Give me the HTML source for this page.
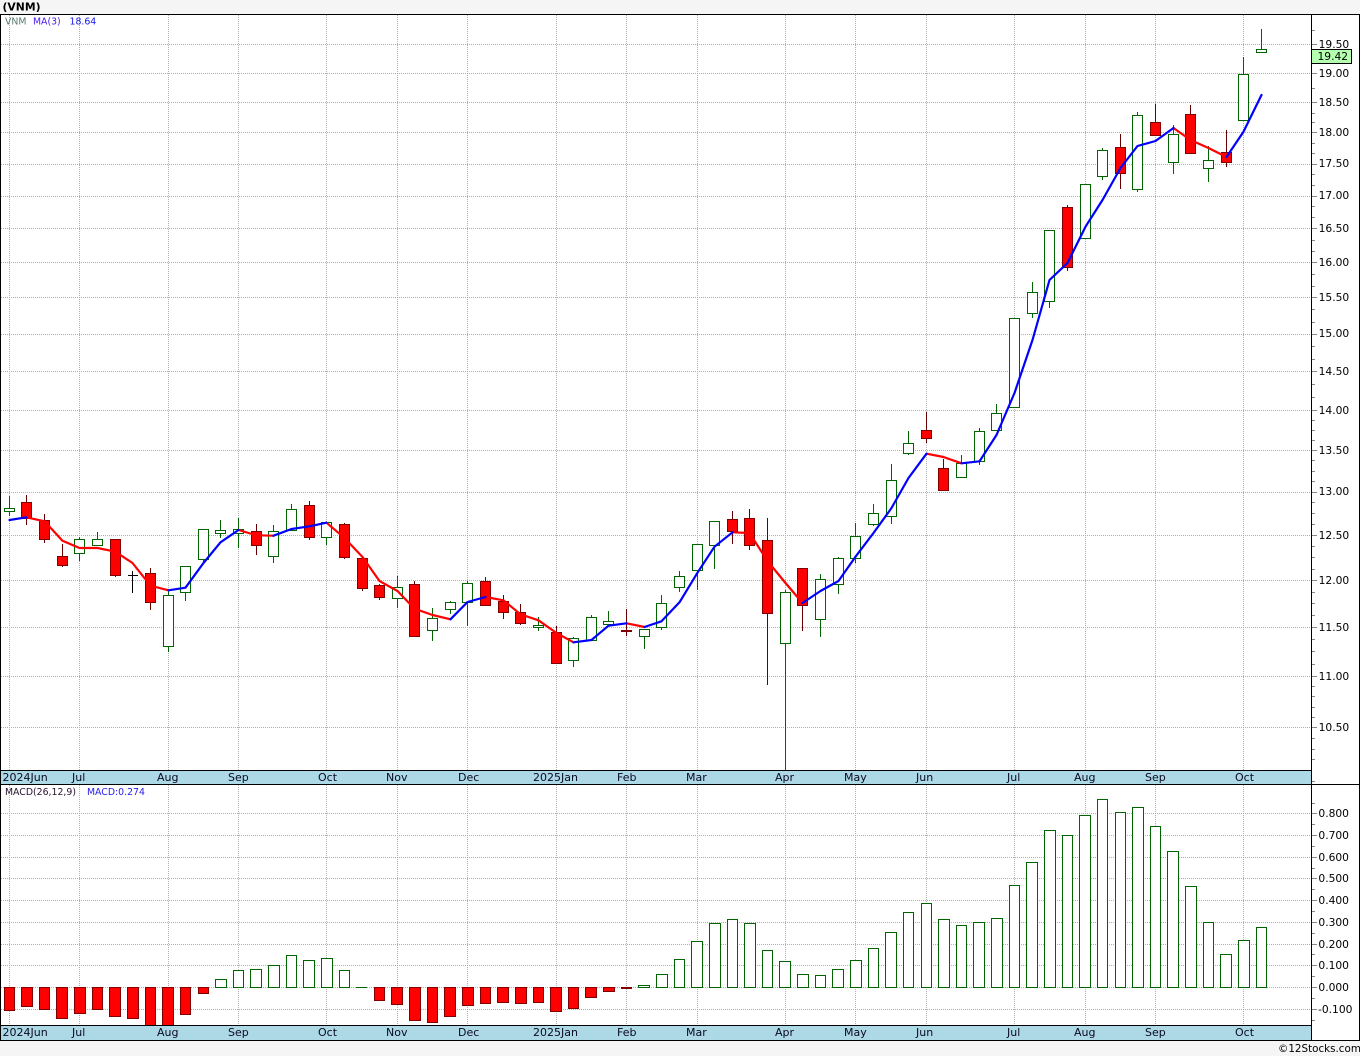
<!DOCTYPE html>
<html><head><meta charset="utf-8"><title>VNM</title>
<style>
html,body{margin:0;padding:0;width:1360px;height:1056px;background:#f5f5f5;overflow:hidden}
svg{display:block;position:absolute;left:0;top:0}
text{font-family:"DejaVu Sans","Liberation Sans",sans-serif}
.a{font-size:10.7px;fill:#000}
.d{font-size:11px;fill:#0a0a20}
.s{font-size:9.35px}
</style></head><body>
<svg width="1360" height="1056" viewBox="0 0 1360 1056" xmlns="http://www.w3.org/2000/svg">
<rect x="0" y="0" width="1360" height="1056" fill="#f5f5f5"/>
<rect x="0" y="14" width="1360" height="1027" fill="#fff"/>
<text x="2.5" y="10.5" style="font-size:10.8px;font-weight:bold;fill:#000">(VNM)</text>

<g shape-rendering="crispEdges" fill="none">
<path stroke="#b0b0b0" stroke-dasharray="1 1" d="M1 44.5H1311M1 73.5H1311M1 102.5H1311M1 132.5H1311M1 164.5H1311M1 196.5H1311M1 228.5H1311M1 262.5H1311M1 297.5H1311M1 334.5H1311M1 371.5H1311M1 410.5H1311M1 450.5H1311M1 492.5H1311M1 535.5H1311M1 580.5H1311M1 627.5H1311M1 676.5H1311M1 727.5H1311M1 813.5H1311M1 835.5H1311M1 857.5H1311M1 878.5H1311M1 900.5H1311M1 922.5H1311M1 944.5H1311M1 965.5H1311M1 987.5H1311M1 1009.5H1311"/>
<path stroke="#b0b0b0" stroke-dasharray="1 1" d="M9.5 15V770M79.5 15V770M168.5 15V770M238.5 15V770M326.5 15V770M397.5 15V770M467.5 15V770M556.5 15V770M626.5 15V770M697.5 15V770M785.5 15V770M855.5 15V770M926.5 15V770M1014.5 15V770M1085.5 15V770M1155.5 15V770M1243.5 15V770M9.5 785V1025M79.5 785V1025M168.5 785V1025M238.5 785V1025M326.5 785V1025M397.5 785V1025M467.5 785V1025M556.5 785V1025M626.5 785V1025M697.5 785V1025M785.5 785V1025M855.5 785V1025M926.5 785V1025M1014.5 785V1025M1085.5 785V1025M1155.5 785V1025M1243.5 785V1025"/>

<path stroke="#006400" d="M9.5 496V516M79.5 537V561M97.5 532V546M168.5 590V652M185.5 566V601M203.5 529V563M220.5 520V538M238.5 518V548M273.5 525V563M291.5 504V530M326.5 522V545M397.5 576V608M432.5 608V641M450.5 601V614M467.5 581V626M538.5 617V631M573.5 637V667M591.5 615V641M608.5 611V625M644.5 629V649M661.5 595V630M679.5 571V592M697.5 544V590M714.5 521V569M785.5 590V770M820.5 574V637M838.5 557V594M855.5 523V563M873.5 504V526M891.5 464V524M908.5 431V455M961.5 455V477M979.5 428V465M996.5 404V430M1014.5 318V408M1032.5 282V318M1049.5 230V308M1085.5 184V238M1102.5 148V180M1137.5 112V192M1173.5 125V174M1208.5 146V182M1243.5 57V120M1261.5 29V53"/>
<path stroke="#660000" d="M26.5 495V525M44.5 514V543M62.5 544V567M115.5 539V577M150.5 568V610M256.5 524V555M309.5 501V540M344.5 523V559M362.5 558V591M379.5 584V600M414.5 581V636M485.5 577V605M503.5 595V619M520.5 604V625M556.5 626V663M626.5 609V636M732.5 511V544M749.5 509V550M767.5 518V685M802.5 568V631M926.5 412V443M943.5 459V490M1067.5 205V271M1120.5 134V189M1155.5 104V135M1190.5 105V154M1226.5 130V167"/>
<path stroke="#000" d="M132.5 571V593M128 575.5H138"/>

<path stroke="#006400" fill="#fff" d="M4.5 508.5h10v3h-10zM74.5 539.5h10v14h-10zM92.5 539.5h10v6h-10zM163.5 595.5h10v51h-10zM180.5 566.5h10v26h-10zM198.5 529.5h10v30h-10zM215.5 530.5h10v3h-10zM233.5 529.5h10v4h-10zM268.5 531.5h10v25h-10zM286.5 509.5h10v21h-10zM321.5 522.5h10v15h-10zM392.5 587.5h10v11h-10zM427.5 618.5h10v12h-10zM445.5 602.5h10v7h-10zM462.5 583.5h10v19h-10zM533.5 625.5h10v2h-10zM568.5 638.5h10v22h-10zM586.5 617.5h10v23h-10zM603.5 621.5h10v3h-10zM639.5 629.5h10v7h-10zM656.5 603.5h10v24h-10zM674.5 576.5h10v11h-10zM692.5 544.5h10v26h-10zM709.5 521.5h10v24h-10zM780.5 592.5h10v51h-10zM815.5 579.5h10v40h-10zM833.5 558.5h10v26h-10zM850.5 536.5h10v22h-10zM868.5 513.5h10v11h-10zM886.5 480.5h10v36h-10zM903.5 443.5h10v10h-10zM956.5 463.5h10v14h-10zM974.5 431.5h10v30h-10zM991.5 413.5h10v17h-10zM1009.5 318.5h10v89h-10zM1027.5 292.5h10v21h-10zM1044.5 230.5h10v71h-10zM1080.5 184.5h10v54h-10zM1097.5 150.5h10v26h-10zM1132.5 115.5h10v74h-10zM1168.5 134.5h10v28h-10zM1203.5 160.5h10v8h-10zM1238.5 74.5h10v46h-10zM1256.5 49.5h10v3h-10z"/>
<path stroke="#800000" fill="#f00" d="M21.5 502.5h10v16h-10zM39.5 520.5h10v19h-10zM57.5 556.5h10v9h-10zM110.5 539.5h10v36h-10zM145.5 573.5h10v29h-10zM251.5 531.5h10v14h-10zM304.5 505.5h10v32h-10zM339.5 524.5h10v33h-10zM357.5 558.5h10v30h-10zM374.5 585.5h10v12h-10zM409.5 584.5h10v52h-10zM480.5 581.5h10v24h-10zM498.5 601.5h10v11h-10zM515.5 612.5h10v11h-10zM551.5 632.5h10v31h-10zM621.5 630.5h10v1h-10zM727.5 519.5h10v12h-10zM744.5 518.5h10v27h-10zM762.5 540.5h10v73h-10zM797.5 568.5h10v37h-10zM921.5 430.5h10v8h-10zM938.5 468.5h10v22h-10zM1062.5 207.5h10v60h-10zM1115.5 147.5h10v26h-10zM1150.5 122.5h10v13h-10zM1185.5 114.5h10v39h-10zM1221.5 152.5h10v10h-10z"/>

<path stroke="#800000" fill="#f00" d="M4.5 987.5V1010.5H14.5V987.5zM21.5 987.5V1006.5H32.5V987.5zM39.5 987.5V1009.5H49.5V987.5zM56.5 987.5V1018.5H67.5V987.5zM74.5 987.5V1013.5H85.5V987.5zM92.5 987.5V1009.5H102.5V987.5zM109.5 987.5V1016.5H120.5V987.5zM127.5 987.5V1018.5H138.5V987.5zM145.5 987.5V1026H155.5V987.5zM162.5 987.5V1026H173.5V987.5zM180.5 987.5V1014.5H190.5V987.5zM198.5 987.5V993.5H208.5V987.5zM374.5 987.5V1000.5H384.5V987.5zM391.5 987.5V1004.5H402.5V987.5zM409.5 987.5V1020.5H420.5V987.5zM427.5 987.5V1022.5H437.5V987.5zM444.5 987.5V1016.5H455.5V987.5zM462.5 987.5V1005.5H473.5V987.5zM480.5 987.5V1003.5H490.5V987.5zM497.5 987.5V1002.5H508.5V987.5zM515.5 987.5V1003.5H526.5V987.5zM533.5 987.5V1002.5H543.5V987.5zM550.5 987.5V1011.5H561.5V987.5zM568.5 987.5V1008.5H578.5V987.5zM585.5 987.5V997.5H596.5V987.5zM603.5 987.5V991.5H614.5V987.5zM621.5 987.5V988.5H631.5V987.5z"/>
<path stroke="#006400" fill="#fff" d="M215.5 987.5V979.5H226.5V987.5zM233.5 987.5V970.5H243.5V987.5zM250.5 987.5V969.5H261.5V987.5zM268.5 987.5V965.5H279.5V987.5zM286.5 987.5V955.5H296.5V987.5zM303.5 987.5V960.5H314.5V987.5zM321.5 987.5V958.5H332.5V987.5zM339.5 987.5V970.5H349.5V987.5zM356 987.5H367M638.5 987.5V985.5H649.5V987.5zM656.5 987.5V974.5H667.5V987.5zM674.5 987.5V959.5H684.5V987.5zM691.5 987.5V941.5H702.5V987.5zM709.5 987.5V923.5H720.5V987.5zM727.5 987.5V919.5H737.5V987.5zM744.5 987.5V923.5H755.5V987.5zM762.5 987.5V950.5H772.5V987.5zM779.5 987.5V961.5H790.5V987.5zM797.5 987.5V974.5H808.5V987.5zM815.5 987.5V975.5H825.5V987.5zM832.5 987.5V969.5H843.5V987.5zM850.5 987.5V960.5H861.5V987.5zM868.5 987.5V948.5H878.5V987.5zM885.5 987.5V932.5H896.5V987.5zM903.5 987.5V912.5H913.5V987.5zM921.5 987.5V903.5H931.5V987.5zM938.5 987.5V919.5H949.5V987.5zM956.5 987.5V925.5H966.5V987.5zM973.5 987.5V922.5H984.5V987.5zM991.5 987.5V918.5H1002.5V987.5zM1009.5 987.5V885.5H1019.5V987.5zM1026.5 987.5V862.5H1037.5V987.5zM1044.5 987.5V830.5H1055.5V987.5zM1062.5 987.5V835.5H1072.5V987.5zM1079.5 987.5V815.5H1090.5V987.5zM1097.5 987.5V799.5H1107.5V987.5zM1115.5 987.5V812.5H1125.5V987.5zM1132.5 987.5V807.5H1143.5V987.5zM1150.5 987.5V826.5H1160.5V987.5zM1167.5 987.5V851.5H1178.5V987.5zM1185.5 987.5V886.5H1196.5V987.5zM1203.5 987.5V922.5H1213.5V987.5zM1220.5 987.5V954.5H1231.5V987.5zM1238.5 987.5V940.5H1249.5V987.5zM1256.5 987.5V927.5H1266.5V987.5z"/>
</g>

<g fill="none" stroke-width="2.2" stroke-linejoin="round" stroke-linecap="round">
<g stroke="#f00">
<polyline points="26.5,517.3 44.5,521.3 62.5,540.7 79.5,548 97.5,548 115.5,551.7 132.5,563 150.5,585.7 168.5,590.3"/>
<polyline points="238.5,530 256.5,535.3 273.5,535.7"/>
<polyline points="326.5,522.7 344.5,538 362.5,557 379.5,581 397.5,591 414.5,608.7 432.5,615 450.5,619.3"/>
<polyline points="485.5,597 503.5,600.3 520.5,614.3 538.5,620.3 556.5,633 573.5,642.3"/>
<polyline points="626.5,623.3 644.5,627"/>
<polyline points="732.5,532.3 749.5,533 767.5,561 785.5,583 802.5,603"/>
<polyline points="926.5,453.7 943.5,457 961.5,463.3"/>
<polyline points="1173.5,128 1190.5,140 1208.5,148 1226.5,157"/>
</g>
<g stroke="#00f">
<polyline points="9.5,520 26.5,517.3"/>
<polyline points="168.5,590.3 185.5,587.7 203.5,563 220.5,542.3 238.5,530"/>
<polyline points="273.5,535.7 291.5,529 309.5,526.3 326.5,522.7"/>
<polyline points="450.5,619.3 467.5,602 485.5,597"/>
<polyline points="573.5,642.3 591.5,640 608.5,625.7 626.5,623.3"/>
<polyline points="644.5,627 661.5,621.3 679.5,602.3 697.5,572.7 714.5,546.7 732.5,532.3"/>
<polyline points="802.5,603 820.5,591 838.5,581 855.5,556.7 873.5,533 891.5,508 908.5,478 926.5,453.7"/>
<polyline points="961.5,463.3 979.5,461.3 996.5,435 1014.5,393 1032.5,340 1049.5,280 1067.5,263 1085.5,226.7 1102.5,200 1120.5,168 1137.5,146 1155.5,141 1173.5,128"/>
<polyline points="1226.5,157 1243.5,131.7 1261.5,95"/>
</g>
</g>

<g shape-rendering="crispEdges">
<rect x="1" y="771" width="1310" height="13" fill="#add8e6"/>
<rect x="1" y="1026" width="1310" height="14" fill="#add8e6"/>
<path fill="none" stroke="#000" d="M0 14.5H1360M0 770.5H1311M0 784.5H1360M0 1025.5H1311M0 1040.5H1360M.5 14V1041M1311.5 14V1041M1359.5 14V1041"/>
<path fill="none" stroke="#888" d="M1312 30.5h3M1312 44.5h5M1312 73.5h5M1312 88.5h3M1312 102.5h5M1312 113.5h3M1312 122.5h3M1312 132.5h5M1312 143.5h3M1312 153.5h3M1312 164.5h5M1312 174.5h3M1312 185.5h3M1312 196.5h5M1312 206.5h3M1312 217.5h3M1312 228.5h5M1312 240.5h3M1312 251.5h3M1312 262.5h5M1312 274.5h3M1312 286.5h3M1312 297.5h5M1312 309.5h3M1312 322.5h3M1312 334.5h5M1312 346.5h3M1312 359.5h3M1312 371.5h5M1312 384.5h3M1312 397.5h3M1312 410.5h5M1312 420.5h3M1312 430.5h3M1312 440.5h3M1312 450.5h5M1312 460.5h3M1312 471.5h3M1312 481.5h3M1312 492.5h5M1312 502.5h3M1312 513.5h3M1312 524.5h3M1312 535.5h5M1312 546.5h3M1312 557.5h3M1312 569.5h3M1312 580.5h5M1312 592.5h3M1312 603.5h3M1312 615.5h3M1312 627.5h5M1312 639.5h3M1312 651.5h3M1312 664.5h3M1312 676.5h5M1312 686.5h3M1312 696.5h3M1312 707.5h3M1312 717.5h3M1312 727.5h5M1312 738.5h3M1312 749.5h3M1312 759.5h3M1312 781.5h3M1312 803.5h3M1312 813.5h5M1312 824.5h3M1312 835.5h5M1312 846.5h3M1312 857.5h5M1312 868.5h3M1312 878.5h5M1312 889.5h3M1312 900.5h5M1312 911.5h3M1312 922.5h5M1312 933.5h3M1312 944.5h5M1312 954.5h3M1312 965.5h5M1312 976.5h3M1312 987.5h5M1312 998.5h3M1312 1009.5h5M1312 1020.5h3"/>
<rect x="1311.5" y="49.5" width="40" height="14" fill="#b4ffb0" stroke="#000"/>
</g>

<text x="5" y="24.5" class="s" fill="#5a7a70">VNM</text>
<text x="33" y="24.5" class="s" fill="#4a1cf0">MA(3)</text>
<text x="69.5" y="24.5" class="s" fill="#1414f0">18.64</text>
<text x="5" y="795" class="s" fill="#2a1030">MACD(26,12,9)</text>
<text x="87" y="795" class="s" fill="#2a20e8">MACD:0.274</text>

<g class="a">
<text x="1318.6" y="48" class="a">19.50</text>
<text x="1317.5" y="60" class="a">19.42</text>
<text x="1318.6" y="77" class="a">19.00</text>
<text x="1318.6" y="106" class="a">18.50</text>
<text x="1318.6" y="136" class="a">18.00</text>
<text x="1318.6" y="167" class="a">17.50</text>
<text x="1318.6" y="199" class="a">17.00</text>
<text x="1318.6" y="232" class="a">16.50</text>
<text x="1318.6" y="266" class="a">16.00</text>
<text x="1318.6" y="301" class="a">15.50</text>
<text x="1318.6" y="337" class="a">15.00</text>
<text x="1318.6" y="375" class="a">14.50</text>
<text x="1318.6" y="414" class="a">14.00</text>
<text x="1318.6" y="454" class="a">13.50</text>
<text x="1318.6" y="495" class="a">13.00</text>
<text x="1318.6" y="539" class="a">12.50</text>
<text x="1318.6" y="584" class="a">12.00</text>
<text x="1318.6" y="631" class="a">11.50</text>
<text x="1318.6" y="680" class="a">11.00</text>
<text x="1318.6" y="731" class="a">10.50</text>
<text x="1318.4" y="817" class="a">0.800</text>
<text x="1318.4" y="839" class="a">0.700</text>
<text x="1318.4" y="861" class="a">0.600</text>
<text x="1318.4" y="882" class="a">0.500</text>
<text x="1318.4" y="904" class="a">0.400</text>
<text x="1318.4" y="926" class="a">0.300</text>
<text x="1318.4" y="948" class="a">0.200</text>
<text x="1318.4" y="969" class="a">0.100</text>
<text x="1318.4" y="991" class="a">0.000</text>
<text x="1318" y="1013" class="a">-0.100</text>
</g>

<text class="d" x="2.5" y="781">2024Jun</text><text class="d" x="72" y="781">Jul</text><text class="d" x="157" y="781">Aug</text><text class="d" x="228" y="781">Sep</text><text class="d" x="318" y="781">Oct</text><text class="d" x="386" y="781">Nov</text><text class="d" x="458" y="781">Dec</text><text class="d" x="533" y="781">2025Jan</text><text class="d" x="617" y="781">Feb</text><text class="d" x="686" y="781">Mar</text><text class="d" x="775" y="781">Apr</text><text class="d" x="844" y="781">May</text><text class="d" x="916" y="781">Jun</text><text class="d" x="1007" y="781">Jul</text><text class="d" x="1074" y="781">Aug</text><text class="d" x="1145" y="781">Sep</text><text class="d" x="1235" y="781">Oct</text>
<text class="d" x="2.5" y="1036">2024Jun</text><text class="d" x="72" y="1036">Jul</text><text class="d" x="157" y="1036">Aug</text><text class="d" x="228" y="1036">Sep</text><text class="d" x="318" y="1036">Oct</text><text class="d" x="386" y="1036">Nov</text><text class="d" x="458" y="1036">Dec</text><text class="d" x="533" y="1036">2025Jan</text><text class="d" x="617" y="1036">Feb</text><text class="d" x="686" y="1036">Mar</text><text class="d" x="775" y="1036">Apr</text><text class="d" x="844" y="1036">May</text><text class="d" x="916" y="1036">Jun</text><text class="d" x="1007" y="1036">Jul</text><text class="d" x="1074" y="1036">Aug</text><text class="d" x="1145" y="1036">Sep</text><text class="d" x="1235" y="1036">Oct</text>

<text x="1278" y="1052" style="font-size:10.35px;fill:#000">©12Stocks.com</text>
</svg>
</body></html>
